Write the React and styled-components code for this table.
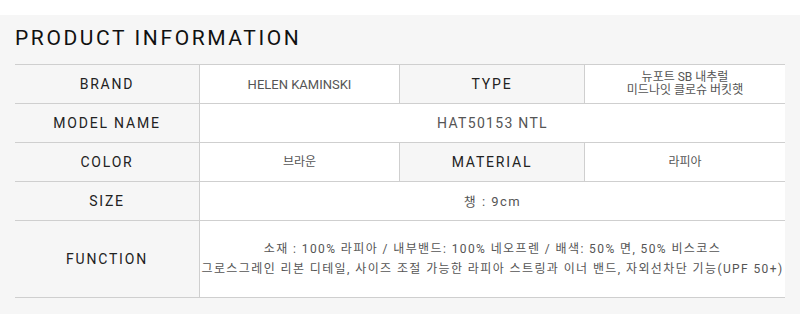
import React from 'react'
import styled, { createGlobalStyle } from 'styled-components'

const GlobalStyle = createGlobalStyle`
  body {
    margin: 0;
    background: #fff;
    font-family: Roboto, "Noto Sans CJK KR", sans-serif;
  }
`

const Page = styled.div`
  padding-top: 15px;
`

const Panel = styled.section`
  background: #f6f6f6;
  padding: 13px 15px 16px;
`

const Title = styled.h2`
  margin: 0 0 15px;
  font-size: 21px;
  line-height: 21px;
  font-weight: 400;
  letter-spacing: 2.6px;
  color: #111;
`

const Table = styled.div`
  border-top: 1px solid #cfcfcf;
`

const Row = styled.div`
  display: grid;
  grid-template-columns: 184px 200px 185px 1fr;
  min-height: ${props => props.tall ? 76 : 38}px;
  border-bottom: 1px solid #cfcfcf;
`

const Label = styled.div`
  display: flex;
  align-items: center;
  justify-content: center;
  font-size: 14px;
  letter-spacing: 1.8px;
  color: #222;
  & + * {
    border-left: 1px solid #cfcfcf;
  }
`

const Value = styled.div`
  display: flex;
  align-items: center;
  justify-content: center;
  text-align: center;
  white-space: nowrap;
  overflow: hidden;
  background: #fff;
  grid-column: span ${props => props.span || 1};
  font-size: ${props => props.size || 12}px;
  letter-spacing: ${props => props.spacing || 0}px;
  line-height: ${props => props.lh || 13}px;
  color: #555;
  & + * {
    border-left: 1px solid #cfcfcf;
  }
`

export default function App() {
  return (
    <Page>
      <GlobalStyle />
      <Panel>
        <Title>PRODUCT INFORMATION</Title>
        <Table>
          <Row>
            <Label>BRAND</Label>
            <Value size={13}>HELEN KAMINSKI</Value>
            <Label>TYPE</Label>
            <Value>뉴포트 SB 내추럴<br />미드나잇 클로슈 버킷햇</Value>
          </Row>
          <Row>
            <Label>MODEL NAME</Label>
            <Value span={3} size={14} spacing={1.3}>HAT50153 NTL</Value>
          </Row>
          <Row>
            <Label>COLOR</Label>
            <Value>브라운</Value>
            <Label>MATERIAL</Label>
            <Value>라피아</Value>
          </Row>
          <Row>
            <Label>SIZE</Label>
            <Value span={3} size={13} spacing={1.5}>챙 : 9cm</Value>
          </Row>
          <Row tall>
            <Label>FUNCTION</Label>
            <Value span={3} size={12} spacing={1.4} lh={20}>
              소재 : 100% 라피아 / 내부밴드: 100% 네오프렌 / 배색: 50% 면, 50% 비스코스<br />
              그로스그레인 리본 디테일, 사이즈 조절 가능한 라피아 스트링과 이너 밴드, 자외선차단 기능(UPF 50+)
            </Value>
          </Row>
        </Table>
      </Panel>
    </Page>
  )
}
